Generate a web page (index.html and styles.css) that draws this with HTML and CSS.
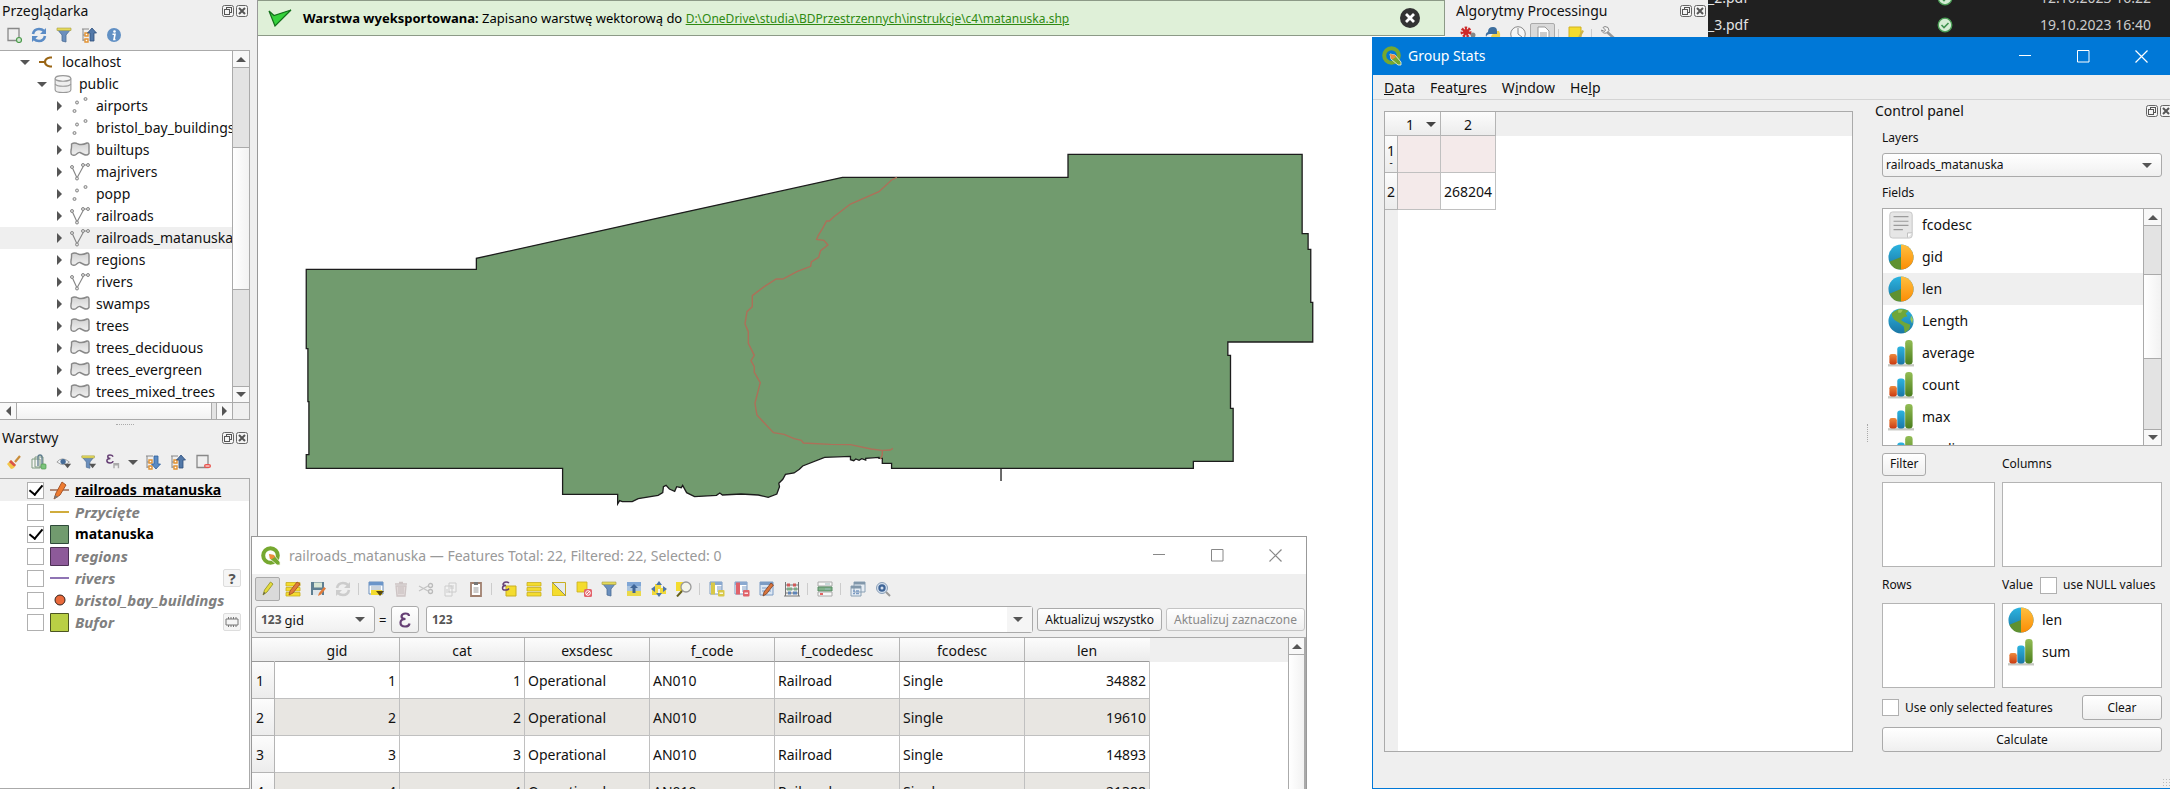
FILE: index.html
```html
<!DOCTYPE html>
<html lang="pl">
<head>
<meta charset="utf-8">
<title>QGIS</title>
<link rel="stylesheet" href="styles.css">
</head>
<body>
<svg class="defs" aria-hidden="true">
  <defs>
    <linearGradient id="gGray" x1="0" y1="0" x2="0" y2="1"><stop offset="0" stop-color="#d2d2d2"/><stop offset="1" stop-color="#f0f0f0"/></linearGradient>
    <linearGradient id="gBlue" x1="0" y1="0" x2="0" y2="1"><stop offset="0" stop-color="#2cb4e0"/><stop offset="1" stop-color="#1a76a4"/></linearGradient>
    <linearGradient id="gOrange" x1="0" y1="0" x2="0" y2="1"><stop offset="0" stop-color="#ffbf3f"/><stop offset="1" stop-color="#fb8d05"/></linearGradient>
    <linearGradient id="gRed" x1="0" y1="0" x2="0" y2="1"><stop offset="0" stop-color="#ee8a3c"/><stop offset="1" stop-color="#c93a12"/></linearGradient>
    <linearGradient id="gGreen" x1="0" y1="0" x2="0" y2="1"><stop offset="0" stop-color="#93bd55"/><stop offset="1" stop-color="#4a7d1d"/></linearGradient>
  </defs>
  <symbol id="float" viewBox="0 0 12 12"><rect x=".5" y=".5" width="11" height="11" rx="2" fill="#f4f4f4" stroke="#666"/><rect x="4.500" y="2.500" width="5" height="5" fill="none" stroke="#555"/><rect x="2.500" y="4.500" width="5" height="5" fill="#f4f4f4" stroke="#555"/></symbol>
  <symbol id="close" viewBox="0 0 12 12"><rect x=".5" y=".5" width="11" height="11" rx="2" fill="#f4f4f4" stroke="#666"/><path d="M3 3l6 6M9 3l-6 6" stroke="#555" stroke-width="2"/></symbol>
  <symbol id="pt" viewBox="0 0 20 18"><g fill="#ddd" stroke="#888"><circle cx="4.500" cy="14" r="1.500"/><circle cx="7" cy="5.500" r="1.500"/><circle cx="15.500" cy="2" r="1.500"/></g></symbol>
  <symbol id="poly" viewBox="0 0 20 18"><path d="M1.500 3q3-2 6.500 0q4 1.500 9-1q2-.5 2 2.500v8q-2 2.500-5 1t-4-2t-4 2q-2 1.500-4.500 0q-1-1.500-.3-5q.5-3 .3-5.500z" fill="url(#gGray)" stroke="#888" stroke-width="1.400"/></symbol>
  <symbol id="line" viewBox="0 0 20 18"><path d="M2 4l5 11l7-13h4" fill="none" stroke="#888" stroke-width="1.200"/><g fill="#ddd" stroke="#888"><circle cx="2" cy="4" r="1.500"/><circle cx="7" cy="15.500" r="1.500"/><circle cx="13" cy="2" r="1.500"/><circle cx="18" cy="2" r="1.500"/></g></symbol>
  <symbol id="conn" viewBox="0 0 14 12"><path d="M0 6h6M13 1.500h-2q-5 1-5 4.500t5 4.500h2" fill="none" stroke="#9a6514" stroke-width="2.200"/></symbol>
  <symbol id="db" viewBox="0 0 16 16"><path d="M1 3v10q0 2.500 7 2.500t7-2.500V3" fill="#eee" stroke="#999"/><ellipse cx="8" cy="3" rx="7" ry="2.500" fill="#f6f6f6" stroke="#999"/><path d="M1 8q1 2 7 2t7-2" fill="none" stroke="#999"/></symbol>
  <symbol id="addlayer" viewBox="0 0 16 16"><path d="M2 1.500h11v12h-11z" fill="none" stroke="#888" stroke-width="1.300"/><circle cx="13" cy="13" r="2.500" fill="#cfe8cf" stroke="#4c9a4c" stroke-width="1.200"/></symbol>
  <symbol id="rmlayer" viewBox="0 0 16 16"><path d="M2 1.500h11v12h-11z" fill="none" stroke="#888" stroke-width="1.300"/><rect x="9" y="10" width="7" height="4" rx="2" fill="#e8554f"/><path d="M10.500 12h4" stroke="#fff"/></symbol>
  <symbol id="refresh" viewBox="0 0 16 16"><path d="M2 7q1-5 6-5q3 0 5 2M14 9q-1 5-6 5q-3 0-5-2" fill="none" stroke="currentColor" stroke-width="2.600"/><path d="M15 1v6h-6zM1 15v-6h6z" fill="currentColor"/></symbol>
  <symbol id="filter" viewBox="0 0 16 16"><path d="M1 2h14l-5 6v7l-4-1v-6z" fill="#6b8fbd" stroke="#4a6c96" stroke-width=".8"/><path d="M1 1h14v2.500h-14z" fill="#e4d95a" stroke="#a8a044" stroke-width=".6"/></symbol>
  <symbol id="collapse" viewBox="0 0 16 16"><path d="M1 2h7M2 2v12M2 8h3M2 13h3" stroke="#888" fill="none"/><path d="M4 6h3v3h-3zM4 12h3v3h-3z" fill="#fff" stroke="#e29232" stroke-width="1.400"/><path d="M11 1l4.500 5h-2.500v8h-4v-8h-2.500z" fill="#5278a8" stroke="#2f4f7c" stroke-width=".8"/></symbol>
  <symbol id="expand" viewBox="0 0 16 16"><path d="M1 2h7M2 2v12M2 8h3M2 13h3" stroke="#888" fill="none"/><path d="M4 6h3v3h-3zM4 12h3v3h-3z" fill="#fff" stroke="#e29232" stroke-width="1.400"/><path d="M11 15l4.500-5h-2.500v-8h-4v8h-2.500z" fill="#5b8bc4" stroke="#2f5f9c" stroke-width=".8"/></symbol>
  <symbol id="info" viewBox="0 0 16 16"><circle cx="8" cy="8" r="7" fill="#6190c4"/><circle cx="8.500" cy="4.500" r="1.300" fill="#fff"/><path d="M6.500 7.200h2.500l-1 5.300h1.500" fill="none" stroke="#fff" stroke-width="1.600"/></symbol>
  <symbol id="brush" viewBox="0 0 16 16"><path d="M9 8l5-6" stroke="#c98c3a" stroke-width="2.200"/><path d="M5 6l5 5q-2 4-5 4l-4-5q1-1 4-4z" fill="#f3c74a"/><path d="M5 6l5 5l-2 1.500l-5-4.500z" fill="#d9534a"/></symbol>
  <symbol id="group" viewBox="0 0 16 16"><path d="M1 5h8v9h-8zM4 3h8v10h-8z" fill="#f4f4f4" stroke="#7f9a80"/><path d="M7 12v-9q0-2 2-2t2 2v8" fill="none" stroke="#5c7b8c" stroke-width="1.300"/><rect x="10" y="10" width="5" height="5" rx="1" fill="#7cc47c" stroke="#4b9a4b" stroke-width=".7"/></symbol>
  <symbol id="eye" viewBox="0 0 18 16"><path d="M1 8q6-7 14 0q-6 6-14 0z" fill="#eef2f6" stroke="#999"/><circle cx="8" cy="7.500" r="3" fill="#456c98"/><path d="M9 10h8l-4 5z" fill="#555"/></symbol>
  <symbol id="filterd" viewBox="0 0 18 16"><path d="M1 2h14l-5 6v7l-4-1v-6z" fill="#6b8fbd" stroke="#4a6c96" stroke-width=".8"/><path d="M1 1h14v2.500h-14z" fill="#e4d95a" stroke="#a8a044" stroke-width=".6"/><path d="M9 10h8l-4 5z" fill="#555"/></symbol>
  <symbol id="eps" viewBox="0 0 12 16"><path d="M10 4q0-2.500-3.500-2.500t-4 2.800q0 2.700 4 2.700q-5 0-5 3.800q0 3.700 4.500 3.700q4 0 4.500-3" fill="none" stroke="#653f74" stroke-width="2.200"/></symbol>
  <symbol id="epsf" viewBox="0 0 18 18"><path d="M8 3q-1-2-3.500-2t-2.500 2.200q0 1.800 3 1.800q-4 0-4 2.500t3.500 2.500q3 0 3.500-2" fill="none" stroke="#653f74" stroke-width="1.700"/><path d="M9 16v-5h5v5M9 12h5" fill="none" stroke="#aaa" stroke-width="1.600"/></symbol>
  <symbol id="pen" viewBox="0 0 16 16"><path d="M3 14l1.500-5l6-8l2.500 2l-6 8z" fill="#e5dc3c" stroke="#97962b" stroke-width=".9"/><path d="M3 14l1-3l1.500 1z" fill="#555"/></symbol>
  <symbol id="rows" viewBox="0 0 16 16"><path d="M1 1.500h14v3.500h-14zM1 6.500h14v3.500h-14zM1 11.500h14v3.500h-14z" fill="#f4dc2e" stroke="#c9ae20" stroke-width=".8"/></symbol>
  <symbol id="multi" viewBox="0 0 16 16"><path d="M1 1.500h14v3.500h-14zM1 6.500h14v3.500h-14zM1 11.500h14v3.500h-14z" fill="#f4dc2e" stroke="#c9ae20" stroke-width=".8"/><path d="M4 14l1-4l7-9l3 2l-7 9z" fill="#e07b3a" stroke="#9d4a22" stroke-width=".8"/></symbol>
  <symbol id="save" viewBox="0 0 16 16"><path d="M1 1h13v13h-13z" fill="#5f7f92"/><path d="M4 1.500h8v5h-8z" fill="#d9e6d4"/><path d="M3 9h9v5h-9z" fill="#dfe6ea"/><path d="M8 15l1-3l5-6l2 1.500l-5 6z" fill="#e07b3a"/></symbol>
  <symbol id="tbl" viewBox="0 0 16 16"><path d="M1 1h14v12h-14z" fill="#fff" stroke="#6b8fbd"/><path d="M1 1h14v3.500h-14z" fill="#6b95c9"/><path d="M3 6h10M3 8h10" stroke="#9ab"/><path d="M3 9h11v5h-11z" fill="#f4dc2e"/><path d="M8 10h8l-4 5z" fill="#5a4a10"/></symbol>
  <symbol id="trash" viewBox="0 0 16 16"><path d="M3 5h10l-1 10h-8z" fill="#e2dada"/><path d="M2 3h12M6 1.500h4M3 5h10l-1 10h-8zM6 6v7M8 6v7M10 6v7" fill="none" stroke="#cdc4c4" stroke-width="1.300"/></symbol>
  <symbol id="cut" viewBox="0 0 16 16"><path d="M1 5l9 5M1 10l9-5" stroke="#c4c4c4" stroke-width="1.300"/><g fill="none" stroke="#bbb" stroke-width="1.300"><circle cx="12.500" cy="4.500" r="2"/><circle cx="12.500" cy="10.500" r="2"/></g></symbol>
  <symbol id="copy" viewBox="0 0 16 16"><path d="M2 5h7v10h-7zM6 2h7v9h-7z" fill="#f2f2f2" stroke="#ccc"/><path d="M7 5h4M7 7h4M3 9h2M3 11h4" stroke="#ccc"/></symbol>
  <symbol id="paste" viewBox="0 0 16 16"><path d="M3 2h10v13h-10z" fill="#fff" stroke="#a0806f" stroke-width="1.800"/><path d="M6 1h4v3h-4z" fill="#777"/><path d="M5.500 7h5M5.500 9h5M5.500 11h5" stroke="#999"/></symbol>
  <symbol id="selexp" viewBox="0 0 16 16"><path d="M5 5h10v10h-10z" fill="#f4dc2e" stroke="#c9ae20"/><path d="M8 2q-1-1-3-1t-3 2q0 1.500 3 1.500q-3.500 0-3.500 2.500t3.500 2q2 0 3-1.500" fill="none" stroke="#653f74" stroke-width="1.500"/></symbol>
  <symbol id="inv" viewBox="0 0 16 16"><path d="M1.500 1.500h13v13h-13z" fill="#e6eaec" stroke="#c9ae20"/><path d="M1.500 1.500v13h13z" fill="#f4dc2e"/><path d="M1 1l14 14" stroke="#8a8a70"/></symbol>
  <symbol id="desel" viewBox="0 0 16 16"><path d="M1 1h10v10h-10z" fill="#f4dc2e" stroke="#c9ae20" stroke-width=".8"/><rect x="8" y="8" width="8" height="8" rx="1.500" fill="#e3626a"/><circle cx="12" cy="12" r="2.300" fill="none" stroke="#fff"/><path d="M10 14l4-4" stroke="#fff"/></symbol>
  <symbol id="top" viewBox="0 0 16 16"><path d="M1 1h14v4h-14z" fill="#7fa6d6"/><path d="M1 5h14v5h-14z" fill="#a9c3de"/><path d="M1 10h14v5h-14z" fill="#ead94a"/><path d="M8 3l4 4h-2.500v5h-3v-5h-2.500z" fill="#3f6597"/></symbol>
  <symbol id="pan" viewBox="0 0 16 16"><path d="M4 3h6v5h-6zM1 8h6v6h-6zM9 7h6v6h-6z" fill="#f0d93a"/><path d="M8 0l3 4h-6zM8 16l3-4h-6zM0 8l4-3v6zM16 8l-4-3v6z" fill="#4c74a8"/></symbol>
  <symbol id="zoom" viewBox="0 0 16 16"><path d="M0 1h9v9h-9z" fill="#f4dc2e"/><circle cx="10" cy="6" r="5" fill="#f2f4ea" stroke="#999" stroke-width="1.300"/><path d="M6 10l-5 5.500" stroke="#66601c" stroke-width="2"/></symbol>
  <symbol id="cols" viewBox="0 0 16 16"><path d="M1 1h12v12h-12z" fill="#fff" stroke="#7c9cc4"/><path d="M1 1h12v3h-12z" fill="#8aa9d0"/><path d="M8 6h5M8 8h5M8 10h5" stroke="#7c9cc4"/><path d="M2 1.500h4v12h-4z" fill="currentColor"/><rect x="9" y="9" width="6.500" height="6.500" rx="1" fill="currentColor"/><path d="M10.500 12.200h3.500" stroke="#fff" stroke-width="1.300"/></symbol>
  <symbol id="editcol" viewBox="0 0 16 16"><path d="M1 1h13v13h-13z" fill="#dbe6f3" stroke="#7c9cc4"/><path d="M1 1h13v3h-13z" fill="#7c9cc4"/><path d="M3 7h9M3 10h9" stroke="#7c9cc4"/><path d="M4 15l1-4l7-9l2.500 2l-7 9z" fill="#d9743c" stroke="#7a4024" stroke-width=".8"/></symbol>
  <symbol id="abacus" viewBox="0 0 16 16"><path d="M1.500 1v14M14.500 1v14M0 15h16M1 4h14M1 8h14M1 12h14" stroke="#777"/><path d="M3 2.500h3v3h-3zM9 2.500h3v3h-3z" fill="#d05a5a"/><path d="M3 6.500h5v3h-5zM10 6.500h3v3h-3z" fill="#7cab88"/><path d="M4 10.500h3v3h-3zM9 10.500h4v3h-4z" fill="#5f85b8"/></symbol>
  <symbol id="cond" viewBox="0 0 16 16"><path d="M1 1h14v4h-14z" fill="#f8f8f8" stroke="#aaa"/><path d="M1 6h14v4h-14z" fill="#7fb18a" stroke="#568c62"/><path d="M1 11h14v4h-14z" fill="#f8f8f8" stroke="#aaa"/><path d="M3 13h3" stroke="#d33" stroke-width="1.500"/><path d="M8 3h5M8 8h5" stroke="#9bb"/></symbol>
  <symbol id="dock" viewBox="0 0 16 16"><path d="M4 1h11v10h-11zM1 5h10v10h-10z" fill="#e6edf4" stroke="#8aa0b4"/><path d="M4 1h11v2.500h-11zM1 5h10v2.500h-10z" fill="#8197aa"/><path d="M3 10h2M6 10h3M3 12.500h2M6 12.500h3" stroke="#7c9cc4" stroke-width="1.300"/></symbol>
  <symbol id="act" viewBox="0 0 16 16"><circle cx="7" cy="7" r="5.500" fill="#d5e0ee" stroke="#8aa0b8"/><circle cx="7" cy="7" r="2.600" fill="none" stroke="#3f6597" stroke-width="2.200"/><path d="M11 11l4 4" stroke="#999" stroke-width="2"/></symbol>
  <symbol id="qgis" viewBox="0 0 20 20"><circle cx="9.500" cy="9.500" r="7.300" fill="none" stroke="currentColor" stroke-width="4"/><path d="M8 8l5 1l6 7v3h-3l-7-6z" fill="currentColor" stroke="#f5f8ea" stroke-width=".8"/><path d="M8 8l5 1l1 2l-3 2l-2 0z" fill="#ee8d3c"/></symbol>
  <symbol id="file" viewBox="0 0 26 30"><rect x="1" y="1" width="24" height="28" rx="3" fill="#e6e6e6" stroke="#c4c4c4"/><path d="M5 6h16M5 11h16M5 15.500h16M5 20h10" stroke="#9b9b9b" stroke-width="1.300"/><path d="M20 28.500v-5h5" fill="#fff" stroke="#bbb"/></symbol>
  <symbol id="pie" viewBox="0 0 28 28"><circle cx="14" cy="14" r="13.500" fill="url(#gBlue)"/><path d="M14 .5a13.500 13.500 0 0 1 0 27z" fill="url(#gOrange)"/><path d="M14 14v13.500a13.500 13.500 0 0 1-12.500-8.500z" fill="#5f9130"/></symbol>
  <symbol id="globe" viewBox="0 0 28 28"><circle cx="14" cy="14" r="13.500" fill="url(#gBlue)"/><path d="M4 6q8-8 18-3l-3 3l2 3l-4 1l-3 3l3 2l7 3l-1 5l-5 4l-1-7l-5-4l-5-3q-3-3-3-7z" fill="#6fa63a"/><path d="M11 2l5 0l-2 3l-3 0zM25 8l2 4l-1 5l-2-5z" fill="#9cc65a"/></symbol>
  <symbol id="bars" viewBox="0 0 28 30"><path d="M0 27h28v2.500h-28z" fill="#c6c8c2"/><rect x="1.500" y="16" width="8" height="11.500" rx="2.500" fill="url(#gRed)"/><rect x="10" y="8" width="8" height="19.500" rx="3" fill="url(#gBlue)"/><rect x="18.500" y="1" width="8" height="26.500" rx="3.500" fill="url(#gGreen)"/></symbol>
  <symbol id="min" viewBox="0 0 13 13"><path d="M0 5.500h12" stroke="currentColor"/></symbol>
  <symbol id="max" viewBox="0 0 13 13"><path d="M.5 .5h11.500v11.500h-11.500z" fill="none" stroke="currentColor"/></symbol>
  <symbol id="x" viewBox="0 0 13 13"><path d="M.5 .5l12 12M12.500 .5l-12 12" stroke="currentColor" stroke-width="1.200"/></symbol>
  <symbol id="sync" viewBox="0 0 16 16"><circle cx="8" cy="8" r="6.800" fill="#d4ecd4" stroke="#4a9d55" stroke-width="1.300"/><path d="M4.500 8l2.500 2.500l4.500-4.500" fill="none" stroke="#3f9150" stroke-width="1.600"/></symbol>
</svg>

<div class="desktop">
  <aside class="docks">
    <section class="dock">
      <header class="dock-title"><h2>Przeglądarka</h2><button aria-label="Odepnij"><svg><use href="#float"/></svg></button><button aria-label="Zamknij"><svg><use href="#close"/></svg></button></header>
      <div class="tools">
        <button aria-label="Dodaj"><svg><use href="#addlayer"/></svg></button>
        <button class="blue" aria-label="Odśwież"><svg><use href="#refresh"/></svg></button>
        <button aria-label="Filtruj"><svg><use href="#filter"/></svg></button>
        <button aria-label="Zwiń"><svg><use href="#collapse"/></svg></button>
        <button aria-label="Właściwości"><svg><use href="#info"/></svg></button>
      </div>
      <div class="browser">
        <ul class="tree">
          <li class="l0 open"><svg><use href="#conn"/></svg>localhost</li>
          <li class="l1 open"><svg><use href="#db"/></svg>public</li>
          <li><svg><use href="#pt"/></svg>airports</li>
          <li><svg><use href="#pt"/></svg>bristol_bay_buildings</li>
          <li><svg><use href="#poly"/></svg>builtups</li>
          <li><svg><use href="#line"/></svg>majrivers</li>
          <li><svg><use href="#pt"/></svg>popp</li>
          <li><svg><use href="#line"/></svg>railroads</li>
          <li class="sel"><svg><use href="#line"/></svg>railroads_matanuska</li>
          <li><svg><use href="#poly"/></svg>regions</li>
          <li><svg><use href="#line"/></svg>rivers</li>
          <li><svg><use href="#poly"/></svg>swamps</li>
          <li><svg><use href="#poly"/></svg>trees</li>
          <li><svg><use href="#poly"/></svg>trees_deciduous</li>
          <li><svg><use href="#poly"/></svg>trees_evergreen</li>
          <li><svg><use href="#poly"/></svg>trees_mixed_trees</li>
        </ul>
        <div class="vbar"><button class="up" aria-label="W górę"></button><div class="track t-a"></div><div class="thumb t-b"></div><div class="track t-c"></div><button class="down" aria-label="W dół"></button></div>
        <div class="hbar"><button class="left" aria-label="W lewo"></button><div class="thumb"></div><div class="track"></div><button class="right" aria-label="W prawo"></button></div>
        <div class="corner"></div>
      </div>
    </section>
    <div class="grip-h"></div>
    <section class="dock grow">
      <header class="dock-title"><h2>Warstwy</h2><button aria-label="Odepnij"><svg><use href="#float"/></svg></button><button aria-label="Zamknij"><svg><use href="#close"/></svg></button></header>
      <div class="tools tall">
        <button aria-label="Styl"><svg><use href="#brush"/></svg></button>
        <button aria-label="Grupa"><svg><use href="#group"/></svg></button>
        <button aria-label="Widoczność"><svg><use href="#eye"/></svg></button>
        <button aria-label="Filtr"><svg><use href="#filterd"/></svg></button>
        <button aria-label="Wyrażenie"><svg><use href="#epsf"/></svg></button>
        <button class="caret" aria-label="Więcej"></button>
        <button aria-label="Rozwiń"><svg><use href="#expand"/></svg></button>
        <button aria-label="Zwiń"><svg><use href="#collapse"/></svg></button>
        <button aria-label="Usuń"><svg><use href="#rmlayer"/></svg></button>
      </div>
      <ul class="layers">
        <li class="sel on current"><label><input type="checkbox" checked><svg viewBox="0 0 19 19"><path d="M0 9h19" stroke="#b08a78" stroke-width="2"/><path d="M4 18l2-6l6-11l4 3l-6 10z" fill="#ee7b30" stroke="#a8562a"/><path d="M4 18l1-4l3 2z" fill="#777"/></svg><span>railroads_matanuska</span></label></li>
        <li><label><input type="checkbox"><svg viewBox="0 0 19 19"><path d="M0 9h19" stroke="#d0ac3c" stroke-width="2"/></svg><span>Przycięte</span></label></li>
        <li class="on"><label><input type="checkbox" checked><svg viewBox="0 0 19 19"><path d="M.5 .5h18v18h-18z" fill="#719b6e" stroke="#2f4a3a"/></svg><span>matanuska</span></label></li>
        <li><label><input type="checkbox"><svg viewBox="0 0 19 19"><path d="M.5 .5h18v18h-18z" fill="#8d5a99" stroke="#4d3055"/></svg><span>regions</span></label></li>
        <li><label><input type="checkbox"><svg viewBox="0 0 19 19"><path d="M0 9h19" stroke="#8f74b4" stroke-width="2"/></svg><span>rivers</span></label><i class="badge">?</i></li>
        <li><label><input type="checkbox"><svg viewBox="0 0 19 19"><circle cx="10" cy="9" r="5" fill="#ea6a3c" stroke="#33221c"/></svg><span>bristol_bay_buildings</span></label></li>
        <li><label><input type="checkbox"><svg viewBox="0 0 19 19"><path d="M.5 .5h18v18h-18z" fill="#b9cf45" stroke="#4c5522"/></svg><span>Bufor</span></label><i class="badge"><svg viewBox="0 0 14 12"><path d="M1 3h12v6h-12zM3.500 1v2M6 1v2M8.500 1v2M11 1v2M3.500 9v2M6 9v2M8.500 9v2M11 9v2" fill="none" stroke="#777"/></svg></i></li>
      </ul>
    </section>
  </aside>

  <main class="map">
    <div class="message">
      <svg class="tick" viewBox="0 0 24 18"><path d="M1 2l5 4.500l17-5.500l-16 16z" fill="#35d13c" stroke="#13701a" stroke-width="1.200"/></svg>
      <p><b>Warstwa wyeksportowana:</b> Zapisano warstwę wektorową do <a href="#">D:\OneDrive\studia\BDPrzestrzennych\instrukcje\c4\matanuska.shp</a></p>
      <button aria-label="Zamknij"><svg viewBox="0 0 20 20"><circle cx="10" cy="10" r="10" fill="#333"/><path d="M6 6l8 8M14 6l-8 8" stroke="#fff" stroke-width="2.800"/></svg></button>
    </div>
    <svg class="canvas" viewBox="258 36 1187 753" preserveAspectRatio="xMinYMin slice">
      <g transform="translate(290 130) scale(.66326 .33333)">
        <path class="land" d="M24.500 418H281V385L580 253L690 205L833 142H1173V73H1526V311H1535V358H1539V517H1542V636H1414V676H1418V835H1422V994H1362V1015H907V1000H893V985H888V982L868 985V990L862 986L858 991L853 987L850 992L845 989V979L806 982L773 1008L768 1018L760 1029L747 1033L743 1048L737 1060L738 1070L734 1092L721 1102L706 1095L680 1092L652 1095L648 1089L643 1096L610 1100L598 1088L592 1066L590 1073L583 1070L580 1084L572 1077L567 1066L563 1070L562 1088L555 1096L525 1106L516 1115H501L497 1112L494 1122V1093H411V1015H24.500V974H28.500V815H27V656H24.500Z"/>
        <path class="land" d="M1072 1015V1053"/>
        <path class="rail" d="M915 142L907 150L888 185L845 222L820 260L813 273H809L803 295L796 318L794 328L805 331L811 345L800 362L797 382L786 396L785 409L765 424L743 447H733L715 470L697 497V530L689 545L686 582L691 605V640L700 676L695 692L700 710V727L709 758L701 820L704 855L718 885L729 908L745 913L760 926L771 931L774 939L815 943L845 944L876 957L893 961L905 960L909 955M893 961V975L890 988"/>
      </g>
    </svg>
  </main>

  <aside class="processing">
    <header class="dock-title"><h2>Algorytmy Processingu</h2><button aria-label="Odepnij"><svg><use href="#float"/></svg></button><button aria-label="Zamknij"><svg><use href="#close"/></svg></button></header>
    <div class="tools">
      <button aria-label="Modele"><svg viewBox="0 0 16 16"><circle cx="6" cy="6" r="3.500" fill="none" stroke="#cc2a2a" stroke-width="4" stroke-dasharray="2 1"/><circle cx="6" cy="6" r="3" fill="#cc2a2a"/><circle cx="13" cy="9" r="2.500" fill="#888"/></svg></button>
      <button aria-label="Skrypty"><svg viewBox="0 0 16 16"><path d="M3 9V6q0-5 5-5q4 0 4 4v3H5q-3 0-4 3q-1-4 2-5z" fill="#3d6e9e"/><path d="M12 5h2q2 3 1 7H6q0-4 3-4h3z" fill="#f0d04a"/></svg></button>
      <button aria-label="Historia"><svg viewBox="0 0 16 16"><circle cx="8" cy="8" r="7.300" fill="#f7f7f7" stroke="#888"/><path d="M8 2v6l4 3" fill="none" stroke="#888"/></svg></button>
      <button class="pressed" aria-label="Wyniki"><svg viewBox="0 0 16 16"><path d="M3 1h7l4 4v11H3z" fill="#fff" stroke="#999"/><path d="M5 7h7M5 9h7M5 11h7" stroke="#999"/></svg></button>
      <i class="sep"></i>
      <button aria-label="Edycja"><svg viewBox="0 0 16 16"><path d="M1 1h12v12H1z" fill="#f4dc2e" stroke="#d0b020"/><path d="M9 13l5-9l2 1l-5 9z" fill="#cdb44a"/></svg></button>
      <i class="sep"></i>
      <button aria-label="Opcje"><svg viewBox="0 0 16 16"><path d="M5 5l10 9" stroke="#999" stroke-width="2.500"/><path d="M2 1.500l2.500 2.500l-1 1.500l-3-1.500q1 4 5 3l2.500-2.500q0-4-4-4z" fill="#f4f4f4" stroke="#888"/></svg></button>
    </div>
  </aside>

  <section class="explorer">
    <div class="entry"><span>_2.pdf</span><svg><use href="#sync"/></svg><time>12.10.2023 16:22</time></div>
    <div class="entry"><span>_3.pdf</span><svg><use href="#sync"/></svg><time>19.10.2023 16:40</time></div>
  </section>
</div>

<section class="window attrs">
  <header class="titlebar"><svg class="logo"><use href="#qgis"/></svg><h1>railroads_matanuska — Features Total: 22, Filtered: 22, Selected: 0</h1>
    <button aria-label="Minimize"><svg><use href="#min"/></svg></button><button aria-label="Maximize"><svg><use href="#max"/></svg></button><button aria-label="Close"><svg><use href="#x"/></svg></button></header>
  <div class="tools">
    <button class="pressed" aria-label="Toggle editing"><svg><use href="#pen"/></svg></button>
    <button aria-label="Multi edit"><svg><use href="#multi"/></svg></button>
    <button aria-label="Save"><svg><use href="#save"/></svg></button>
    <button class="pale" aria-label="Reload" disabled><svg><use href="#refresh"/></svg></button>
    <i class="sep"></i>
    <button aria-label="Add feature"><svg><use href="#tbl"/></svg></button>
    <button aria-label="Delete" disabled><svg><use href="#trash"/></svg></button>
    <button aria-label="Cut" disabled><svg><use href="#cut"/></svg></button>
    <button aria-label="Copy" disabled><svg><use href="#copy"/></svg></button>
    <button aria-label="Paste"><svg><use href="#paste"/></svg></button>
    <i class="sep"></i>
    <button aria-label="Select by expression"><svg><use href="#selexp"/></svg></button>
    <button aria-label="Select all"><svg><use href="#rows"/></svg></button>
    <button aria-label="Invert"><svg><use href="#inv"/></svg></button>
    <button aria-label="Deselect"><svg><use href="#desel"/></svg></button>
    <button aria-label="Filter"><svg><use href="#filter"/></svg></button>
    <button aria-label="Move to top"><svg><use href="#top"/></svg></button>
    <button aria-label="Pan"><svg><use href="#pan"/></svg></button>
    <button aria-label="Zoom"><svg><use href="#zoom"/></svg></button>
    <i class="sep"></i>
    <button class="yellow" aria-label="New field"><svg><use href="#cols"/></svg></button>
    <button class="red" aria-label="Delete field"><svg><use href="#cols"/></svg></button>
    <button aria-label="Organize columns"><svg><use href="#editcol"/></svg></button>
    <button aria-label="Field calculator"><svg><use href="#abacus"/></svg></button>
    <i class="sep"></i>
    <button aria-label="Conditional formatting"><svg><use href="#cond"/></svg></button>
    <i class="sep"></i>
    <button aria-label="Dock"><svg><use href="#dock"/></svg></button>
    <button aria-label="Actions"><svg><use href="#act"/></svg></button>
  </div>
  <div class="calc">
    <div class="combo field"><b>123</b><select aria-label="Field"><option>gid</option></select></div>
    <span class="eq">=</span>
    <button class="btn epsilon" aria-label="Expression"><svg><use href="#eps"/></svg></button>
    <div class="combo expr"><b>123</b><input type="text" aria-label="Expression"><span class="drop"></span></div>
    <button class="btn">Aktualizuj wszystko</button>
    <button class="btn" disabled>Aktualizuj zaznaczone</button>
  </div>
  <div class="grid">
    <div class="grid-view">
      <table>
        <thead><tr><th class="rh"></th><th>gid</th><th>cat</th><th>exsdesc</th><th>f_code</th><th>f_codedesc</th><th>fcodesc</th><th>len</th></tr></thead>
        <tbody>
          <tr><th class="rh">1</th><td class="n">1</td><td class="n">1</td><td>Operational</td><td>AN010</td><td>Railroad</td><td>Single</td><td class="n">34882</td></tr>
          <tr><th class="rh">2</th><td class="n">2</td><td class="n">2</td><td>Operational</td><td>AN010</td><td>Railroad</td><td>Single</td><td class="n">19610</td></tr>
          <tr><th class="rh">3</th><td class="n">3</td><td class="n">3</td><td>Operational</td><td>AN010</td><td>Railroad</td><td>Single</td><td class="n">14893</td></tr>
          <tr><th class="rh">4</th><td class="n">4</td><td class="n">4</td><td>Operational</td><td>AN010</td><td>Railroad</td><td>Single</td><td class="n">21388</td></tr>
        </tbody>
      </table>
    </div>
    <div class="vbar"><button class="up" aria-label="Up"></button><div class="thumb t-c"></div></div>
  </div>
</section>

<section class="window stats">
  <header class="titlebar"><svg class="logo"><use href="#qgis"/></svg><h1>Group Stats</h1>
    <button aria-label="Minimize"><svg><use href="#min"/></svg></button><button aria-label="Maximize"><svg><use href="#max"/></svg></button><button aria-label="Close"><svg><use href="#x"/></svg></button></header>
  <nav class="menu"><a href="#"><u>D</u>ata</a><a href="#">Feat<u>u</u>res</a><a href="#">W<u>i</u>ndow</a><a href="#">He<u>l</u>p</a></nav>
  <div class="stats-body">
    <div class="result">
      <table>
        <colgroup><col class="c-head"><col class="c-one"><col class="c-two"></colgroup>
        <thead><tr><th class="rh" colspan="2">1</th><th>2</th></tr></thead>
        <tbody>
          <tr><th>1<small>-</small></th><td class="pink"></td><td class="pink"></td></tr>
          <tr><th>2</th><td class="pink"></td><td>268204</td></tr>
        </tbody>
      </table>
    </div>
    <div class="grip-v"></div>
    <div class="panel">
      <header class="dock-title"><h2>Control panel</h2><button aria-label="Float"><svg><use href="#float"/></svg></button><button aria-label="Close"><svg><use href="#close"/></svg></button></header>
      <div class="form">
        <label class="cap" for="layers">Layers</label>
        <div class="combo wide"><select id="layers"><option>railroads_matanuska</option></select></div>
        <div class="cap">Fields</div>
        <div class="fields">
          <ul>
            <li><svg><use href="#file"/></svg>fcodesc</li>
            <li><svg><use href="#pie"/></svg>gid</li>
            <li class="sel"><svg><use href="#pie"/></svg>len</li>
            <li><svg><use href="#globe"/></svg>Length</li>
            <li><svg><use href="#bars"/></svg>average</li>
            <li><svg><use href="#bars"/></svg>count</li>
            <li><svg><use href="#bars"/></svg>max</li>
            <li><svg><use href="#bars"/></svg>median</li>
          </ul>
          <div class="vbar"><button class="up" aria-label="Up"></button><div class="track t-a"></div><div class="thumb t-b"></div><div class="track t-c"></div><button class="down" aria-label="Down"></button></div>
        </div>
        <div class="zones">
          <div class="zcap"><button class="btn">Filter</button></div><div class="zcap">Columns</div>
          <ul class="zone"></ul><ul class="zone"></ul>
          <div class="zcap">Rows</div><div class="zcap">Value <label><input type="checkbox">use NULL values</label></div>
          <ul class="zone"></ul>
          <ul class="zone"><li><svg><use href="#pie"/></svg>len</li><li><svg><use href="#bars"/></svg>sum</li></ul>
        </div>
        <div class="only"><label><input type="checkbox">Use only selected features</label><button class="btn">Clear</button></div>
        <button class="btn calculate">Calculate</button>
      </div>
      <div class="size-grip"></div>
    </div>
  </div>
</section>
</body>
</html>
```
FILE: styles.css
```css
*, *::before, *::after { box-sizing: border-box; }
html, body { height: 100%; }
body { margin: 0; overflow: hidden; background: #efefef; color: #111; font: 14px/20px "Noto Sans", "Open Sans", sans-serif; position: relative; }
h1, h2, p, ul { margin: 0; padding: 0; font-size: inherit; font-weight: normal; }
ul { list-style: none; }
button, input, select { font: inherit; color: inherit; margin: 0; }
button { border: 0; padding: 0; background: none; display: flex; align-items: center; justify-content: center; }
svg { display: block; flex: none; }
.defs { position: absolute; width: 0; height: 0; }

.desktop { display: flex; height: 100%; }
.docks { width: 250px; flex: none; display: flex; flex-direction: column; }
.map { flex: 1; min-width: 0; margin-left: 7px; border-left: 1px solid #999; background: #fff; display: flex; flex-direction: column; }
.processing { width: 263px; flex: none; }
.explorer { width: 462px; flex: none; background: #202020; }

/* Docks */
.dock { display: flex; flex-direction: column; }
.dock.grow { flex: 1; min-height: 0; }
.dock-title { display: flex; align-items: center; gap: 2px; height: 21px; padding: 0 2px; }
.dock-title h2 { flex: 1; }
.dock-title svg { width: 12px; height: 12px; }
.tools { display: flex; align-items: center; height: 29px; padding-left: 1px; padding-bottom: 2px; flex: none; }
.tools.tall { height: 30px; }
.tools button { width: 25px; height: 24px; flex: none; }
.tools svg { width: 16px; height: 16px; }
.tools .blue { color: #5b8cc6; }
.tools .pale { color: #ccc; }
.tools .yellow { color: #d8c848; }
.tools .red { color: #e0626a; }
.tools .sep { width: 1px; height: 12px; margin: 0 4px 0 3px; background: #ccc; }
.tools .pressed { border: 1px solid #aaa; border-radius: 2px; background: #dadada; }
.caret::before { content: ""; border: 5px solid transparent; border-top-color: #555; border-bottom: 0; }
.tools .caret { width: 14px; }

.browser { display: grid; grid-template-columns: 1fr 17px; grid-template-rows: 351px 17px; border: 1px solid #aaa; border-left: 0; background: #fff; }
.tree { overflow: hidden; }
.tree li { display: flex; align-items: center; gap: 6px; height: 22px; padding-left: 54px; white-space: nowrap; }
.tree .l0 { padding-left: 20px; }
.tree .l1 { padding-left: 37px; }
.tree svg { width: 20px; height: 18px; }
.tree .l0 svg { height: 12px; }
.tree li::before { content: ""; flex: none; width: 5px; margin: 0 2px 0 3px; border: 5px solid transparent; border-left-color: #555; border-right: 0; }
.tree .open::before { width: 10px; margin: 0; border: 5px solid transparent; border-top-color: #555; border-bottom: 0; }
.sel { background: #efefef; }

.vbar { display: flex; flex-direction: column; border-left: 1px solid #aaa; }
.hbar { display: flex; border-top: 1px solid #aaa; }
.vbar button, .hbar button { background: #f8f8f8; }
.vbar button { height: 16px; flex: none; }
.hbar button { width: 16px; }
.track { background: #e3e3e3; }
.thumb { background: linear-gradient(90deg, #fff, #f2f2f2); }
.vbar > * + * { border-top: 1px solid #aaa; }
.hbar > * + * { border-left: 1px solid #aaa; }
.hbar .thumb { flex: 1; background: linear-gradient(#fff, #f2f2f2); }
.hbar .track { width: 5px; }
.up::before, .down::before, .left::before, .right::before { content: ""; border: 5px solid transparent; }
.up::before { border-bottom-color: #555; border-top: 0; }
.down::before { border-top-color: #555; border-bottom: 0; }
.left::before { border-right-color: #555; border-left: 0; }
.right::before { border-left-color: #555; border-right: 0; }
.browser .t-a { flex: 80; }
.browser .t-b { flex: 142; }
.browser .t-c { flex: 97; }
.corner { border: solid #aaa; border-width: 1px 0 0 1px; background: #efefef; }
.grip-h { width: 18px; height: 5px; margin: 0 auto 2px; border-bottom: 1px dotted #aaa; }

.layers { flex: 1; border: 1px solid #aaa; border-left: 0; background: #fff; }
.layers li { display: flex; align-items: center; justify-content: space-between; height: 22px; padding: 0 8px 0 27px; color: #808080; font-size: 15px; font-weight: bold; font-style: italic; }
.layers li.on { color: #000; font-size: 14px; font-style: normal; }
.layers .current span { text-decoration: underline; }
.layers label { display: flex; align-items: center; gap: 6px; white-space: nowrap; }
.layers label svg { width: 19px; height: 19px; }
.badge { display: flex; align-items: center; justify-content: center; width: 18px; height: 18px; border: 1px solid #ddd; border-radius: 2px; background: #f5f5f5; color: #555; font-style: normal; }
.badge svg { width: 14px; height: 12px; }
input[type="checkbox"] { appearance: none; flex: none; width: 17px; height: 17px; border: 1px solid #b0b0b0; background: #fff; display: flex; align-items: center; justify-content: center; }
input[type="checkbox"]:checked::before { content: ""; width: 8px; height: 13px; border: solid #000; border-width: 0 2px 2px 0; transform: rotate(40deg); margin-top: -3px; }

/* Map */
.message { display: flex; align-items: center; height: 36px; flex: none; padding: 0 24px 0 10px; border: 1px solid #8c9a87; border-left: 0; background: #dff0d8; font-size: 13px; color: #000; }
.message .tick { width: 24px; height: 18px; margin-right: 11px; }
.message p { flex: 1; white-space: nowrap; }
.message a { color: #2f8a12; font-size: 12px; }
.message button svg { width: 20px; height: 20px; }
.canvas { flex: 1; width: 100%; min-height: 0; }
.canvas path { vector-effect: non-scaling-stroke; }
.land { fill: #719b6e; stroke: #1c1c1c; stroke-width: 1.3px; }
.rail { fill: none; stroke: #ad7059; stroke-width: 1.4px; }

/* Desktop behind */
.processing .dock-title { padding: 0 2px 0 11px; }
.processing .tools { padding: 2px 0 0 10px; align-items: flex-start; }
.processing .tools button { height: 22px; }
.processing .tools .sep { margin-top: 6px; }
.explorer { height: 38px; overflow: hidden; display: flex; flex-direction: column; justify-content: flex-end; color: #e4e4e4; }
.entry { display: flex; align-items: center; height: 27px; flex: none; }
.entry span { flex: 1; }
.entry svg { width: 16px; height: 16px; }
.entry time { width: 217px; padding-left: 87px; white-space: nowrap; color: #ccc; }

/* Windows */
.window { position: absolute; display: flex; flex-direction: column; background: #efefef; }
.titlebar { display: flex; align-items: center; height: 38px; flex: none; }
.titlebar h1 { flex: 1; white-space: nowrap; }
.titlebar .logo { width: 20px; height: 20px; margin: 0 8px 0 9px; color: #76a830; }
.titlebar button { width: 58px; height: 38px; }
.titlebar button svg { width: 13px; height: 13px; }
.attrs { left: 251px; top: 536px; bottom: 0; width: 1056px; border: 1px solid #999; border-bottom: 0; }
.attrs .titlebar { background: #fff; color: #999; height: 37px; padding-right: 2px; }
.attrs .titlebar button { color: #888; }
.attrs .tools { height: 32px; padding-left: 3px; }

.calc { display: flex; align-items: center; height: 27px; padding: 0 1px 0 3px; gap: 4px; flex: none; font-size: 13px; }
.combo { position: relative; display: flex; align-items: center; border: 1px solid #aaa; border-radius: 3px; background: linear-gradient(#fff, #f0f0f0); }
.combo b { padding-left: 5px; font-size: 12px; color: #555; flex: none; }
.combo select, .combo input { appearance: none; border: 0; background: none; flex: 1; min-width: 0; padding: 0 3px; outline: 0; }
.field, .wide { height: 27px; }
.field { width: 120px; }
.expr { flex: 1; height: 27px; background: #fff; margin-left: 3px; }
.field::after, .wide::after, .drop::before { content: ""; border: 5px solid transparent; border-top-color: #555; border-bottom: 0; margin-right: 9px; }
.drop { width: 25px; height: 25px; background: #f5f5f5; display: flex; align-items: center; justify-content: flex-end; }
.eq { width: 8px; }
.btn { height: 23px; border: 1px solid #aaa; border-radius: 3px; background: linear-gradient(#fff, #efefef); padding: 0 7px; white-space: nowrap; font-size: 12px; }
.btn:disabled { color: #888; border-color: #c4c4c4; }
.epsilon { width: 28px; height: 27px; padding: 0; }
.epsilon svg { width: 12px; height: 16px; }

table { border-collapse: separate; border-spacing: 0; table-layout: fixed; }
th { font-weight: normal; padding: 2px 0 0; text-align: center; border: solid #b4b4b4; border-width: 0 1px 1px 0; background: linear-gradient(#fcfcfc, #ececec); }
td { border: solid #c0c0c0; border-width: 0 1px 1px 0; padding: 2px 3px 0; }
.grid { flex: 1; min-height: 0; display: flex; margin-top: 4px; border-top: 1px solid #aaa; background: #fff; }
.grid-view { flex: 1; overflow: hidden; background: linear-gradient(#efefef, #efefef) 0 0 / 100% 24px no-repeat; }
.grid table { width: 898px; }
.grid thead th { height: 24px; width: 125px; border-bottom-color: #999; }
.grid thead th:last-child { border-right-color: transparent; }
.grid thead .rh { width: 23px; border-right-color: transparent; }
.grid tbody th { height: 37px; text-align: left; padding-left: 4px; }
.grid tbody tr:nth-child(even) td { background: #e8e6e2; }
.grid .n { text-align: right; }
.grid .vbar { width: 18px; background: #f8f8f8; border-right: 2px solid #aaa; }
.grid .t-c { flex: 1; }

.stats { left: 1372px; top: 37px; right: 0; bottom: 0; border: solid #0078d7; border-width: 0 0 1px 1px; }
.stats .titlebar { background: #0078d7; color: #fff; }
.stats .titlebar .logo { margin-right: 6px; }
.menu { display: flex; gap: 15px; height: 25px; padding: 2px 0 0 11px; align-items: center; border-bottom: 1px solid #d4d4d4; flex: none; }
.menu a { color: inherit; text-decoration: none; }
.stats-body { flex: 1; min-height: 0; display: flex; }
.result { flex: 1; margin: 11px 0 36px 11px; border: 1px solid #aaa; overflow: hidden; background: linear-gradient(#efefef, #efefef) 0 0 / 100% 24px no-repeat, linear-gradient(#efefef, #efefef) 0 0 / 13px 100% no-repeat, #fff; }
.result table { width: 111px; }
.c-head { width: 13px; }
.c-one { width: 43px; }
.c-two { width: 55px; }
.result thead th { height: 24px; }
.result tbody th { height: 37px; line-height: 14px; }
.result small { display: block; line-height: 8px; font-size: 10px; }
.result .pink { background: #f4eaea; }
.result thead .rh { text-align: right; padding-right: 4px; }
.result thead .rh::after { content: ""; display: inline-block; border: 5px solid transparent; border-top-color: #444; border-bottom: 0; margin-left: 12px; vertical-align: 3px; }
.grip-v { width: 1px; height: 18px; align-self: center; margin: 0 5px 22px 14px; border-left: 1px dotted #aaa; }
.panel { width: 297px; flex: none; display: flex; flex-direction: column; }
.panel .dock-title { height: 22px; padding: 0 0 0 2px; margin-right: -2px; }
.form { padding: 0 8px 0 9px; font-size: 12px; }
.cap { display: block; height: 31px; line-height: 31px; }
.wide { height: 24px; }
.fields { display: flex; height: 238px; border: 1px solid #aaa; background: #fff; font-size: 14px; }
.fields ul { flex: 1; overflow: hidden; }
.fields li, .zone li { display: flex; align-items: center; gap: 8px; height: 32px; padding-left: 5px; }
.fields svg, .zone svg { width: 26px; height: 28px; }
.fields .vbar { width: 18px; }
.fields .t-a { flex: 48; }
.fields .t-b { flex: 84; }
.fields .t-c { flex: 71; }
.zones { display: grid; grid-template-columns: 113px 1fr; column-gap: 7px; }
.zcap { height: 36px; display: flex; align-items: center; gap: 7px; white-space: nowrap; }
.zcap label, .only label { display: flex; align-items: center; gap: 6px; }
.zone { height: 85px; border: 1px solid #b4b4b4; background: #fff; font-size: 14px; }
.only { display: flex; justify-content: space-between; align-items: center; height: 39px; }
.only .btn { width: 80px; height: 25px; }
.calculate { width: 100%; height: 25px; }
.size-grip { width: 8px; height: 8px; margin: auto 0 2px auto; background: radial-gradient(#bbb 1px, transparent 1px) 0 0 / 3px 3px; }
```
